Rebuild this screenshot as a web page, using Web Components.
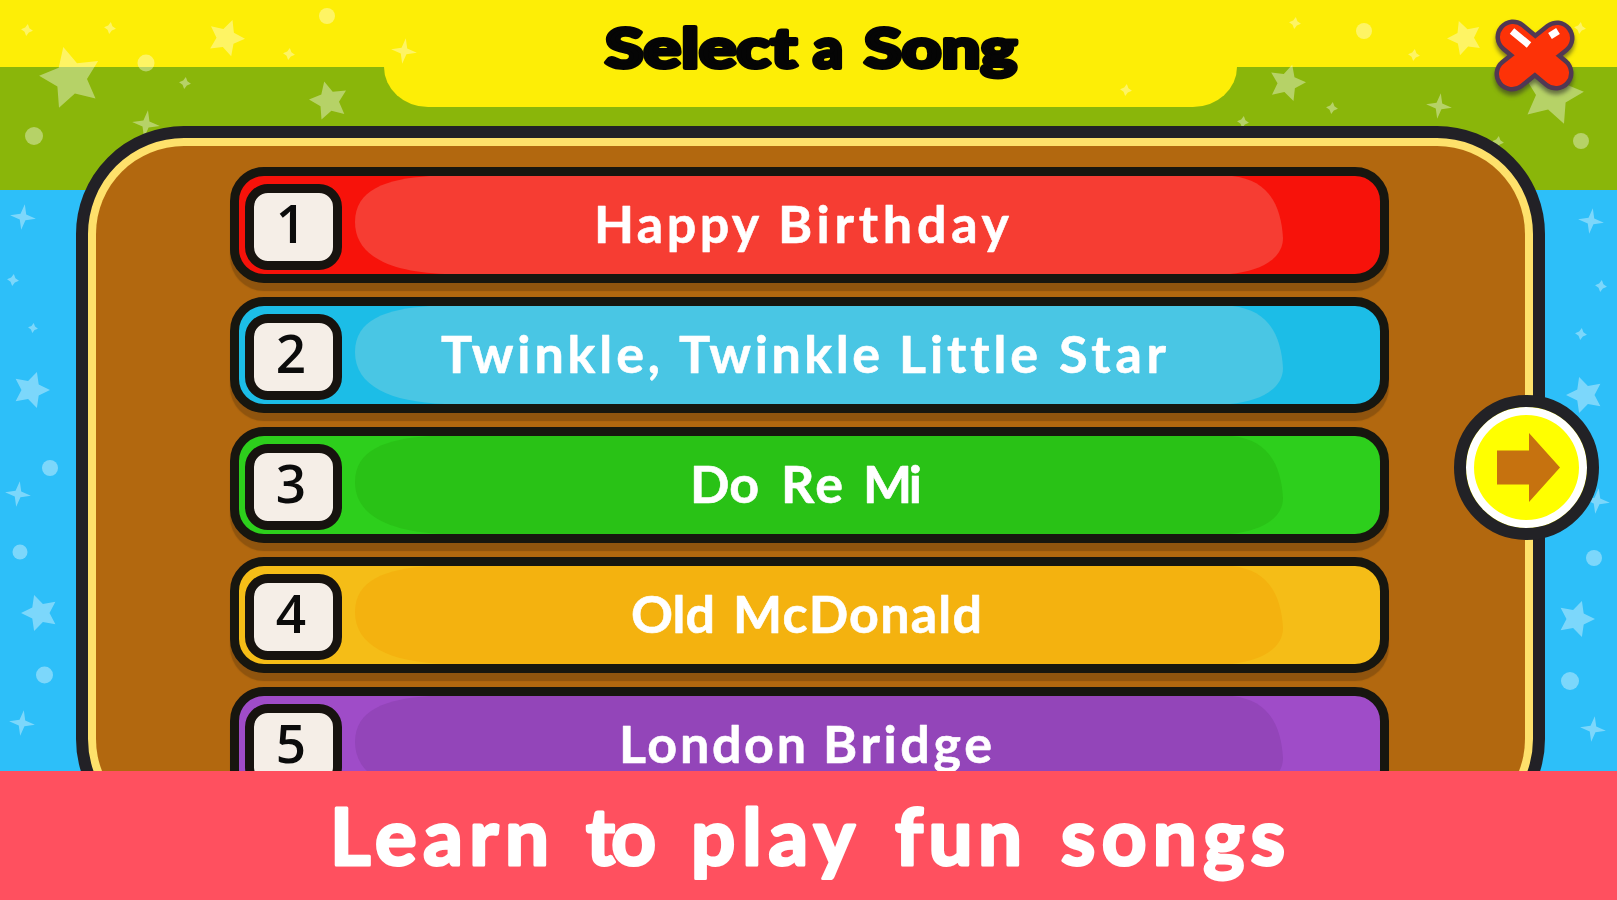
<!DOCTYPE html>
<html lang="en">
<head>
<meta charset="utf-8">
<title>Select a Song</title>
<style>
  html, body { margin: 0; }
  body { width: 1617px; height: 900px; overflow: hidden; font-family: Lato, "Open Sans", sans-serif; }
</style>
</head>
<body>
<song-app></song-app>

<script>
"use strict";
(() => {
  // words: "text:x:width|text:x:width", x is measured on the page
  const wordSpans = (words, adjust = "spacing") => words.split("|").map((item) => {
    const [text, x, width] = item.split(":");
    return `<tspan x="${x - 2}" textLength="${+width + 4}" lengthAdjust="${adjust}">${text}</tspan>`;
  }).join(" ");

  class StarField extends HTMLElement {
    constructor() {
      super();
      this.attachShadow({ mode: "open" });
      this.shadowRoot.innerHTML = `<style>${this.styles}</style>
        <svg width="1617" height="771" fill="#fff" fill-opacity=".38">${this.shapes}</svg>`;
    }
    get shapes() {
      const stars = [
        [226, 38, 19, 2], [71, 78, 32, 184], [329, 101, 20, 184], [1465, 38, 18, 178],
        [1287, 83, 19, -2], [1552, 94, 32, -4], [31, 390, 19, 0], [40, 613, 19, 180],
        [1585, 395, 19, 180], [1576, 619, 19, 0]
      ];
      const sparkles = [
        [27, 30, 6], [110, 28, 6], [289, 54, 6], [185, 83, 6], [404, 51, 13], [146, 124, 14],
        [23, 217, 13], [1295, 23, 6], [1414, 55, 6], [1332, 108, 6], [1439, 106, 13], [1243, 122, 6],
        [1498, 142, 6], [1580, 28, 6], [1126, 90, 6], [13, 280, 6], [33, 328, 5], [18, 494, 13],
        [22, 723, 13], [1591, 221, 13], [1601, 286, 6], [1581, 334, 6], [1597, 501, 13], [1593, 729, 13]
      ];
      const dots = [
        [327, 16, 8], [146, 63, 8.5], [34, 136, 9], [1364, 31, 8], [1581, 141, 8], [50, 468, 8],
        [20, 552, 7.5], [44.5, 675, 8.5], [1594, 558, 8], [1570, 681, 9]
      ];
      const starPath = (cx, cy, r, turn) => {
        const points = [];
        for (let i = 0; i < 10; i++) {
          const a = (turn + i * 36) * Math.PI / 180;
          const d = i % 2 ? r * 0.5 : r;
          points.push(`${(cx + d * Math.cos(a)).toFixed(1)},${(cy + d * Math.sin(a)).toFixed(1)}`);
        }
        return `<polygon points="${points.join(" ")}"/>`;
      };
      const sparkle = (cx, cy, r) => {
        const s = r * (r < 8 ? 0.36 : 0.22);
        return `<path transform="translate(${cx} ${cy}) rotate(8)" d="M0-${r}L${s}-${s}L${r} 0L${s} ${s}L0 ${r}L-${s} ${s}L-${r} 0L-${s}-${s}Z"/>`;
      };
      return stars.map((s) => starPath(...s)).join("") +
        sparkles.map((s) => sparkle(...s)).join("") +
        dots.map(([x, y, r]) => `<circle cx="${x}" cy="${y}" r="${r}"/>`).join("");
    }
    get styles() {
      return `
        :host { display: block; position: absolute; inset: 0; }
        svg { display: block; }
      `;
    }
  }
  customElements.define("star-field", StarField);

  class TopBar extends HTMLElement {
    constructor() {
      super();
      this.attachShadow({ mode: "open" });
      this.shadowRoot.innerHTML = `<style>${this.styles}</style>
        <div class="tab">
          <svg width="853" height="107" viewBox="384 0 853 107">
            <text y="68">${wordSpans(this.getAttribute("words"), "spacingAndGlyphs")}</text>
          </svg>
        </div>`;
    }
    get styles() {
      return `
        :host {
          display: flex;
          justify-content: center;
          height: 107px;
          padding-left: 4px;
          background: linear-gradient(#fdee06 67px, transparent 67px);
        }
        .tab { width: 853px; background: #fdee06; border-radius: 0 0 44px 44px / 0 0 40px 40px; }
        svg { display: block; }
        text {
          font-size: 56px;
          font-weight: 900;
          fill: #050505;
          stroke: #050505;
          stroke-width: 4px;
          stroke-linejoin: round;
        }
      `;
    }
  }
  customElements.define("top-bar", TopBar);

  class SongRow extends HTMLElement {
    constructor() {
      super();
      this.attachShadow({ mode: "open" });
      this.shadowRoot.innerHTML = `<style>${this.styles}</style>
        <div class="tile"><slot></slot></div>
        <svg width="1038" height="98" viewBox="342 0 1038 98">
          <path class="shine" d="M430 0 C385 3 355 14 355 46 C355 80 390 96 445 98 H1230 C1262 95 1283 82 1283 62 C1281 28 1268 4 1232 0Z"/>
          <text y="67">${wordSpans(this.getAttribute("words"))}</text>
        </svg>`;
    }
    get styles() {
      return `
        :host {
          display: flex;
          box-sizing: border-box;
          width: 1159px;
          height: 116px;
          border: 9px solid #17160f;
          border-radius: 34px;
          background: var(--base);
          box-shadow: 0 8px 1px #8f540e;
          overflow: hidden;
        }
        .tile {
          box-sizing: border-box;
          flex: none;
          display: flex;
          justify-content: center;
          width: 97px;
          height: 86px;
          margin: 8px 0 0 6px;
          padding-right: 5px;
          border: 9px solid #17130f;
          border-radius: 23px;
          background: #f5eee7;
          color: #0b0b0b;
          font-family: "Open Sans", Lato, sans-serif;
          font-size: 53px;
          font-weight: 600;
          line-height: 59px;
        }
        svg { display: block; flex: none; }
        .shine { fill: var(--shine); }
        text {
          font-size: 52px;
          font-weight: 700;
          font-variant-ligatures: none;
          fill: #fff;
          stroke: #fff;
          stroke-width: .6px;
          stroke-linejoin: round;
        }
      `;
    }
  }
  customElements.define("song-row", SongRow);

  class SongBoard extends HTMLElement {
    constructor() {
      super();
      this.attachShadow({ mode: "open" });
      this.shadowRoot.innerHTML = `<style>${this.styles}</style><div class="list"><slot></slot></div>`;
    }
    get styles() {
      return `
        :host {
          display: block;
          position: relative;
          box-sizing: border-box;
          width: 1469px;
          height: 721px;
          margin: 19px 0 0 76px;
          border: 12px solid #222126;
          border-radius: 108px;
          background: #fee16b;
          padding: 8px;
        }
        .list {
          box-sizing: border-box;
          height: 100%;
          padding: 21px 0 0 134px;
          border-radius: 88px;
          background: #b2680f;
          display: flex;
          flex-direction: column;
          gap: 14px;
        }
      `;
    }
  }
  customElements.define("song-board", SongBoard);

  class CloseButton extends HTMLElement {
    constructor() {
      super();
      this.attachShadow({ mode: "open" });
      this.shadowRoot.innerHTML = `<style>${this.styles}</style>
        <svg width="92" height="92" viewBox="1490 12 92 92" fill="none" stroke-linecap="round">
          <path class="cross edge" d="M1513 37L1556 73M1557 38L1512 74"/>
          <path class="cross" d="M1513 37L1556 73M1557 38L1512 74"/>
          <path d="M1512 31L1529 45M1550 36L1558 31" stroke="#fff" stroke-width="7" stroke-linecap="butt"/>
        </svg>`;
    }
    get styles() {
      return `
        :host { display: block; position: absolute; left: 1490px; top: 12px; }
        svg { display: block; }
        .cross { stroke: #fd3207; stroke-width: 26px; }
        .edge { stroke: #513853; stroke-width: 35px; filter: drop-shadow(0 4px 2px rgba(50, 50, 40, .6)); }
      `;
    }
  }
  customElements.define("close-button", CloseButton);

  class NextButton extends HTMLElement {
    constructor() {
      super();
      this.attachShadow({ mode: "open" });
      this.shadowRoot.innerHTML = `<style>${this.styles}</style>
        <svg width="63" height="69" viewBox="0 0 63 69"><path fill="#c6720f" d="M0 17.5H32V0L63 34.5L32 69V51.5H0Z"/></svg>`;
    }
    get styles() {
      return `
        :host {
          position: absolute;
          left: 1454px;
          top: 395px;
          box-sizing: border-box;
          width: 145px;
          height: 145px;
          border: 12px solid #222226;
          border-radius: 50%;
          background: #ff0;
          box-shadow: inset 0 0 0 8px #fff;
          display: grid;
          place-items: center;
          padding-left: 4px;
        }
        svg { display: block; }
      `;
    }
  }
  customElements.define("next-button", NextButton);

  class CaptionBanner extends HTMLElement {
    constructor() {
      super();
      this.attachShadow({ mode: "open" });
      this.shadowRoot.innerHTML = `<style>${this.styles}</style>
        <svg width="1617" height="129" viewBox="0 0 1617 129">
          <text y="94">${wordSpans(this.getAttribute("words"))}</text>
        </svg>`;
    }
    get styles() {
      return `
        :host { display: block; height: 129px; background: #ff505f; }
        svg { display: block; }
        text {
          font-size: 78px;
          font-weight: 700;
          fill: #fff;
          stroke: #fff;
          stroke-width: 3px;
          stroke-linejoin: round;
        }
      `;
    }
  }
  customElements.define("caption-banner", CaptionBanner);

  class SongApp extends HTMLElement {
    constructor() {
      super();
      this.attachShadow({ mode: "open" });
      this.shadowRoot.innerHTML = `<style>${this.styles}</style>
        <div class="stage">
          <top-bar words="Select:607:188|a:815:26|Song:866:149"></top-bar>
          <star-field></star-field>
          <song-board>
            <song-row style="--base:#f7120a;--shine:#f63d33" words="Happy:596:160|Birthday:780:227">1</song-row>
            <song-row style="--base:#1cbde7;--shine:#49c6e4" words="Twinkle,:443:215|Twinkle:681:197|Little:901:135|Star:1061:103">2</song-row>
            <song-row style="--base:#2dcf1c;--shine:#29c216" words="Do:692:65|Re:783:58|Mi:865:55">3</song-row>
            <song-row style="--base:#f5bd17;--shine:#f4b20f" words="Old:633:80|McDonald:735:245">4</song-row>
            <song-row style="--base:#9f4cc8;--shine:#9345b9" words="London:621:183|Bridge:825:165">5</song-row>
          </song-board>
          <next-button></next-button>
          <close-button></close-button>
        </div>
        <caption-banner words="Learn:332:215|to:588:66|play:693:158|fun:897:123|songs:1063:220"></caption-banner>`;
    }
    get styles() {
      return `
        :host { display: flex; flex-direction: column; width: 1617px; height: 900px; }
        .stage {
          position: relative;
          height: 771px;
          overflow: hidden;
          background: linear-gradient(#8ab60a 190px, #2dbff9 190px);
        }
      `;
    }
  }
  customElements.define("song-app", SongApp);
})();
</script>
</body>
</html>
